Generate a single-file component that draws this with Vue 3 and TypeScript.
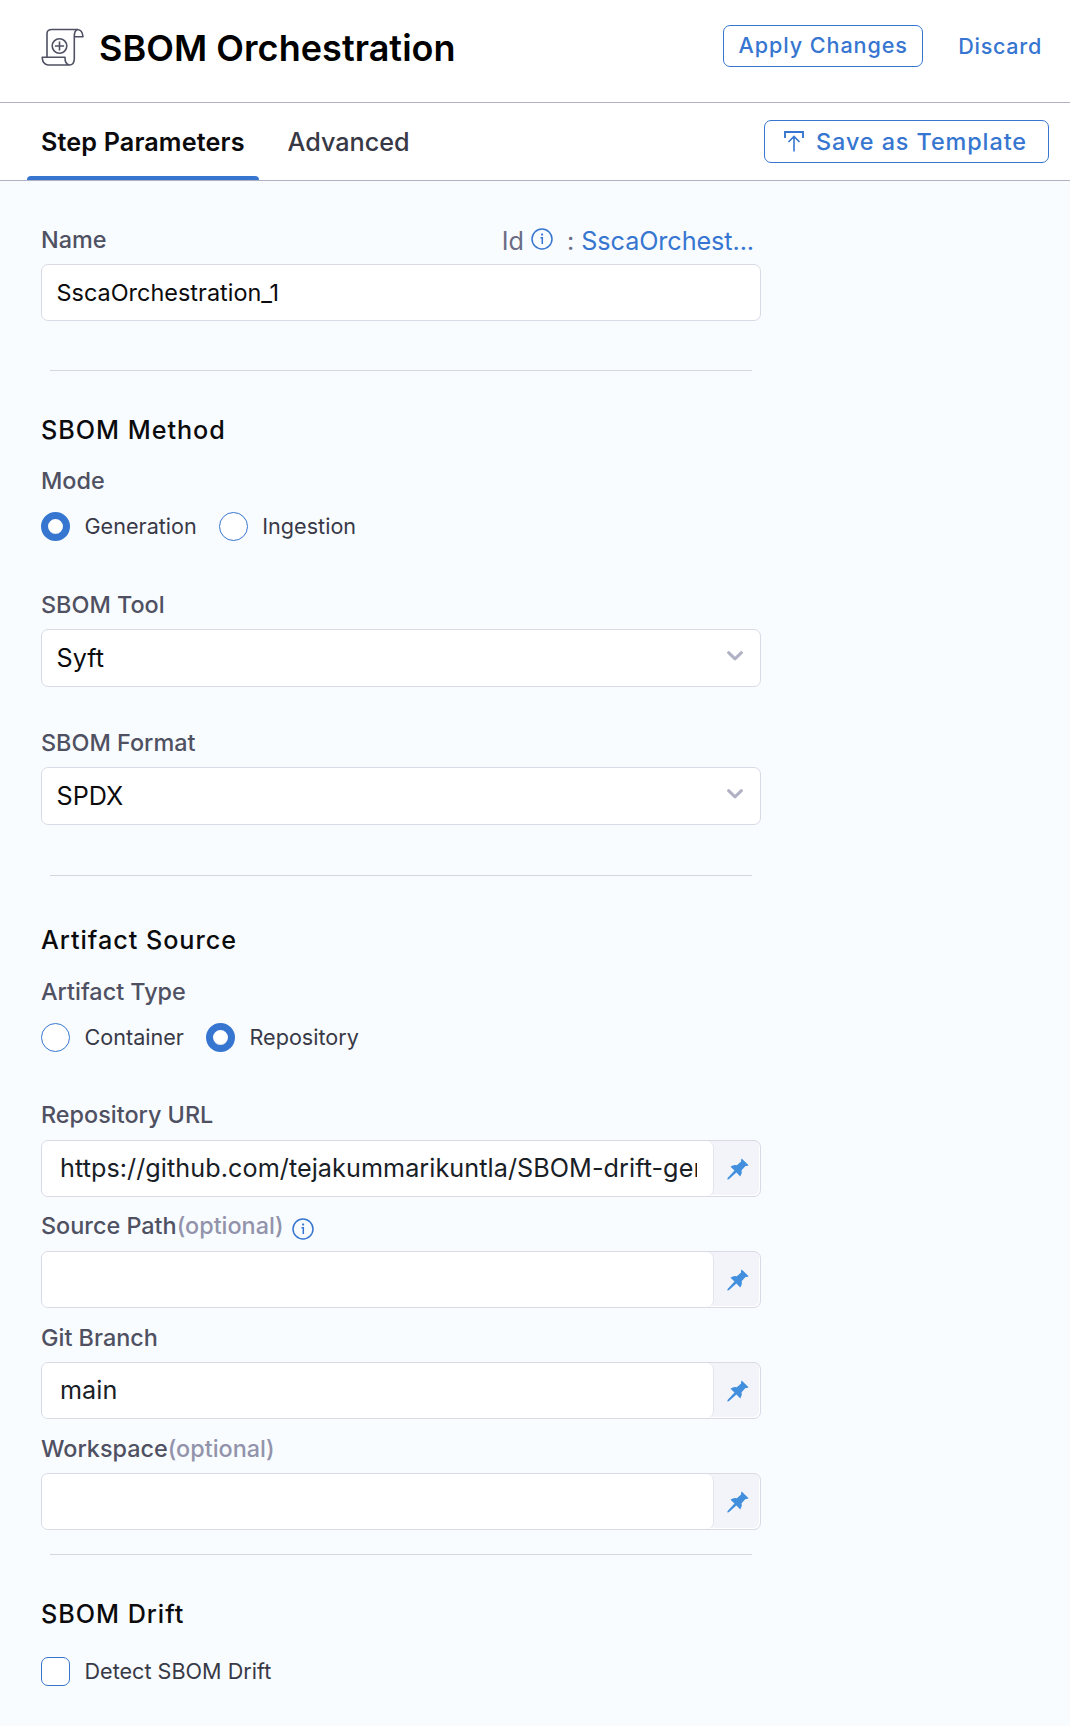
<script setup lang="ts">
import { ref } from 'vue'

interface PinnedField {
  label: string
  value: string
  optional: boolean
  info: boolean
}

const mode = ref<string>('Generation')
const artifactType = ref<string>('Repository')
const detectDrift = ref<boolean>(false)
const modes: string[] = ['Generation', 'Ingestion']
const artifactTypes: string[] = ['Container', 'Repository']

const selects: { label: string; value: string }[] = [
  { label: 'SBOM Tool', value: 'Syft' },
  { label: 'SBOM Format', value: 'SPDX' },
]

const fields: PinnedField[] = [
  { label: 'Repository URL', value: 'https://github.com/tejakummarikuntla/SBOM-drift-gen', optional: false, info: false },
  { label: 'Source Path', value: '', optional: true, info: true },
  { label: 'Git Branch', value: 'main', optional: false, info: false },
  { label: 'Workspace', value: '', optional: true, info: false },
]
</script>

<template>
  <div class="panel">
    <header class="header">
      <svg class="step-icon" viewBox="0 0 44 40" fill="none" stroke="#4f5162" stroke-width="1.600" stroke-linejoin="round">
        <path d="M6 29.500V6.500Q6 2.500 10.800 2.500H36.500Q41.500 2.800 42 9.800H33.300V32Q33 38 28.500 38H7Q1.500 37.500 1.200 30.300H24Q23.800 37.500 28.500 38" />
        <path d="M36.500 2.500Q33.300 3.300 33.300 9.800" />
        <circle cx="18.500" cy="19" r="7.300" />
        <path d="M18.500 14.400v9.200M13.900 19h9.200" />
      </svg>
      <h1 class="title">SBOM Orchestration</h1>
      <button class="btn apply">Apply Changes</button>
      <button class="discard">Discard</button>
    </header>

    <nav class="tabs">
      <div class="tab active">Step Parameters</div>
      <div class="tab">Advanced</div>
      <button class="btn save">
        <svg class="save-icon" viewBox="0 0 20 21" fill="none" stroke="#3676d0" stroke-width="1.600">
          <path d="M1 7V1h18v6" stroke-width="1.900" />
          <path d="M10 20.500V5M4.500 11 10 5.400l5.500 5.600" />
        </svg>
        <span>Save as Template</span>
      </button>
    </nav>

    <main class="form">
      <div class="name-row">
        <span class="label">Name</span>
        <div class="id-group">
          <span>Id</span>
          <svg class="info id-info" viewBox="0 0 22 22" fill="none" stroke="#3676d0">
            <circle cx="11" cy="11" r="10" stroke-width="1.500" />
            <path d="M9.500 9.800H11.300V16" stroke-width="1.500" />
            <path d="M10.100 6.500h2" stroke-width="1.900" />
          </svg>
          <span class="colon">:</span>
          <span class="id-value">SscaOrchest...</span>
        </div>
      </div>
      <div class="box name-box">SscaOrchestration_1</div>
      <div class="divider d1"></div>

      <h2 class="heading">SBOM Method</h2>
      <div class="label sub">Mode</div>
      <div class="radios">
        <label v-for="m in modes" :key="m" class="radio" @click="mode = m">
          <span class="dot" :class="{ on: mode === m }"></span>
          <span>{{ m }}</span>
        </label>
      </div>

      <div v-for="s in selects" :key="s.label" class="select-field">
        <div class="label">{{ s.label }}</div>
        <div class="box select">
          <span>{{ s.value }}</span>
          <svg class="chevron" viewBox="0 0 16 10" fill="none" stroke="#b0b1c3" stroke-width="3" stroke-linecap="round" stroke-linejoin="round">
            <path d="M1.600 1.700 8 7.800l6.400-6.100" />
          </svg>
        </div>
      </div>
      <div class="divider d2"></div>

      <h2 class="heading second">Artifact Source</h2>
      <div class="label sub second">Artifact Type</div>
      <div class="radios">
        <label v-for="t in artifactTypes" :key="t" class="radio" @click="artifactType = t">
          <span class="dot" :class="{ on: artifactType === t }"></span>
          <span>{{ t }}</span>
        </label>
      </div>

      <div class="fields">
        <div v-for="f in fields" :key="f.label" class="field">
          <div class="label field-label">
            <span>{{ f.label }}</span><span v-if="f.optional" class="optional">(optional)</span>
            <svg v-if="f.info" class="info path-info" viewBox="0 0 22 22" fill="none" stroke="#3676d0">
              <circle cx="11" cy="11" r="10" stroke-width="1.500" />
              <path d="M9.500 9.800H11.300V16" stroke-width="1.500" />
              <path d="M10.100 6.500h2" stroke-width="1.900" />
            </svg>
          </div>
          <div class="pinned">
            <div class="pinned-input"><span>{{ f.value }}</span></div>
            <div class="pin-cell">
              <svg class="pin" viewBox="0 0 22 22" fill="#4290dd">
                <path d="M14.700.4 21.600 7.300Q20.300 8.300 18.500 7.900L14.600 12.200Q15.600 15.400 13.300 18.400L9.400 14.500 1.800 21.300.3 21.600.6 20 7.500 12.600 3.500 8.700Q6.500 6.400 9.800 7.300L14.100 3.500Q13.700 1.700 14.700.4Z" />
              </svg>
            </div>
          </div>
        </div>
      </div>
      <div class="divider d3"></div>

      <h2 class="heading">SBOM Drift</h2>
      <label class="check" @click="detectDrift = !detectDrift">
        <span class="checkbox" :class="{ checked: detectDrift }"></span>
        <span>Detect SBOM Drift</span>
      </label>
    </main>
  </div>
</template>

<style>
body {
  margin: 0;
  background: #f8fcff;
}
</style>

<style scoped>
.panel {
  box-sizing: border-box;
  width: 1070px;
  height: 1726px;
  overflow: hidden;
  background: #f8fcff;
  font-family: Inter, "Liberation Sans", sans-serif;
  color: #0b0b0d;
}
.panel * {
  box-sizing: border-box;
}
h1,
h2 {
  margin: 0;
}
button {
  font-family: inherit;
  padding: 0;
  cursor: pointer;
}
.header {
  display: flex;
  align-items: flex-start;
  height: 103px;
  padding: 0 28px 0 41px;
  background: #fff;
  border-bottom: 1px solid #b0b1c4;
}
.step-icon {
  width: 44px;
  height: 40px;
  margin-top: 27px;
}
.title {
  margin: 26px auto 0 14px;
  font-size: 36px;
  line-height: 44px;
  font-weight: 600;
  letter-spacing: 0.05px;
  color: #000;
  white-space: nowrap;
}
.btn {
  display: flex;
  align-items: center;
  justify-content: center;
  border: 1px solid #3676d0;
  border-radius: 7px;
  background: #fff;
  color: #3676d0;
  font-weight: 500;
  white-space: nowrap;
}
.apply {
  width: 200px;
  height: 42px;
  margin-top: 25px;
  padding-bottom: 2px;
  font-size: 21.6px;
  letter-spacing: 0.9px;
}
.discard {
  margin: 33px 0 0 35px;
  border: 0;
  background: none;
  color: #3676d0;
  font-size: 21.6px;
  line-height: 26px;
  font-weight: 500;
  letter-spacing: 0.7px;
}
.tabs {
  display: flex;
  align-items: flex-start;
  height: 78px;
  padding: 0 21px 0 27px;
  background: #fff;
  border-bottom: 1px solid #b0b1c4;
}
.tab {
  height: 77px;
  padding-left: 14px;
  font-size: 25.2px;
  line-height: 78px;
  font-weight: 500;
  color: #383946;
  white-space: nowrap;
}
.tab.active {
  width: 232px;
  margin-right: 14.5px;
  font-weight: 600;
  letter-spacing: 0.13px;
  color: #0b0b0d;
}
.tab.active::after {
  content: "";
  display: block;
  height: 4px;
  margin: -5px 0 0 -14px;
  border-radius: 4px 4px 0 0;
  background: #3676d0;
}
.save {
  width: 285px;
  height: 43px;
  margin: 17px 0 0 auto;
  padding-right: 2px;
  gap: 12px;
  font-size: 23.4px;
  letter-spacing: 0.92px;
}
.save-icon {
  width: 20px;
  height: 21px;
}
.form {
  display: flex;
  flex-direction: column;
  width: 761px;
  padding-left: 41px;
}
.label {
  font-size: 23.4px;
  line-height: 28px;
  font-weight: 500;
  color: #4f5162;
  white-space: nowrap;
}
.name-row {
  display: flex;
  justify-content: space-between;
  height: 38px;
  margin-top: 45px;
}
.id-group {
  display: flex;
  margin-right: 7px;
  font-size: 25.2px;
  line-height: 30px;
  color: #6b6d85;
}
.info {
  width: 22px;
  height: 22px;
}
.id-info {
  margin: 2px 14px 0 7px;
}
.colon {
  margin-right: 7px;
}
.id-value {
  color: #3676d0;
  letter-spacing: -0.08px;
}
.box {
  display: flex;
  align-items: center;
  width: 720px;
  border: 1px solid #d9dae5;
  border-radius: 7px;
  background: #fff;
  padding: 0 20px 0 14.5px;
}
.name-box {
  height: 57px;
  font-size: 23.4px;
  letter-spacing: 0.03px;
  color: #0b0b0d;
}
.divider {
  width: 702px;
  height: 1px;
  margin-left: 9px;
  background: #d5d7df;
}
.d1 {
  margin-top: 49px;
}
.heading {
  margin-top: 44px;
  font-size: 25.2px;
  line-height: 30px;
  font-weight: 500;
  letter-spacing: 0.97px;
}
.heading.second {
  margin-top: 49px;
}
.sub {
  margin-top: 22px;
}
.sub.second {
  margin-top: 23px;
}
.radios {
  display: flex;
  margin-top: 17px;
  height: 29px;
  gap: 22px;
}
.radio,
.check {
  display: flex;
  align-items: center;
  gap: 14.5px;
  font-size: 21.6px;
  line-height: 29px;
  color: #383946;
}
.dot {
  width: 29px;
  height: 29px;
  border: 1px solid #3676d0;
  border-radius: 50%;
  background: #fff;
}
.dot.on {
  border-width: 7px;
  box-shadow: inset 0 -1px 1px rgba(20, 50, 110, 0.1);
}
.select-field {
  margin-top: 50px;
}
.select-field + .select-field {
  margin-top: 42px;
}
.select {
  height: 58px;
  margin-top: 10px;
  font-size: 25.2px;
  justify-content: space-between;
}
.chevron {
  width: 16px;
  height: 10px;
  margin-right: -3px;
  margin-top: -4px;
}
.d2 {
  margin-top: 50px;
}
.fields {
  margin-top: 49px;
}
.field {
  height: 111px;
}
.field:last-child {
  height: 96px;
}
.field-label {
  display: flex;
  height: 39px;
}
.field:nth-child(n + 3) .field-label {
  padding-top: 1px;
}
.optional {
  color: #9293ab;
}
.path-info {
  margin: 6px 0 0 8px;
}
.pinned {
  display: flex;
  width: 720px;
  height: 57px;
  border: 1px solid #d9dae5;
  border-radius: 7px;
  background: #f3f3fa;
  box-shadow: inset -1px -1px 0 #fff;
  overflow: hidden;
}
.pinned-input {
  width: 672px;
  padding: 0 16px 0 18px;
  border-right: 1px solid #e3e4ee;
  border-radius: 0 7px 7px 0;
  background: #fff;
  font-size: 25.2px;
  line-height: 54px;
  letter-spacing: 0.06px;
  color: #182026;
}
.pinned-input span {
  display: block;
  overflow: hidden;
  white-space: nowrap;
}
.pin-cell {
  display: flex;
  align-items: center;
  padding-left: 13px;
}
.pin {
  width: 22px;
  height: 22px;
}
.d3 {
  margin-top: 24px;
}
.check {
  margin-top: 28px;
}
.checkbox {
  width: 29px;
  height: 29px;
  border: 1px solid #3676d0;
  border-radius: 7px;
  background: #fff;
}
.checkbox.checked {
  background: #3676d0;
}
</style>
